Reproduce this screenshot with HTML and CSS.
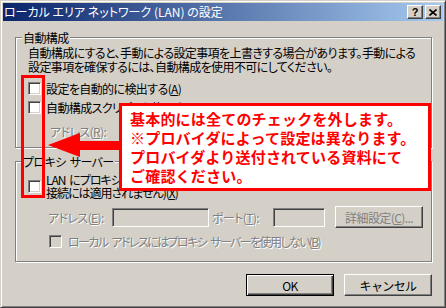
FILE: index.html
```html
<!DOCTYPE html>
<html lang="ja">
<head>
    <meta charset="UTF-8">
    <meta name="viewport" content="width=device-width, initial-scale=1.0">
    <title>ローカル エリア ネットワーク (LAN) の設定</title>
    <link rel="stylesheet" href="styles.css">
</head>
<body>
    <div class="window">
        <div class="titlebar">
            <span class="title">ローカル エリア ネットワーク (LAN) の設定</span>
            <div class="caption-buttons">
                <span class="caption-btn help">?</span>
                <span class="caption-btn close">
                    <svg width="8" height="7" viewBox="0 0 8 7"><path d="M0.5 0.5 L7.5 6.5 M7.5 0.5 L0.5 6.5" stroke="#000" stroke-width="1.6"/></svg>
                </span>
            </div>
        </div>

        <div class="content">
            <fieldset class="group group-auto">
                <legend>自動構成</legend>
                <div class="group-body">
                    <p class="desc">自動構成にすると、手動による設定事項を上書きする場合があります。手動による<br>設定事項を確保するには、自動構成を使用不可にしてください。</p>
                    <div class="check-row first"><span class="check"></span><span>設定を自動的に検出する(<u>A</u>)</span></div>
                    <div class="check-row"><span class="check"></span><span>自動構成スクリプトを使用する(<u>S</u>)</span></div>
                    <div class="script-row disabled">
                        <span>アドレス(<u>R</u>):</span>
                    </div>
                </div>
            </fieldset>

            <fieldset class="group group-proxy">
                <legend>プロキシ サーバー</legend>
                <div class="group-body">
                    <div class="check-row proxy-row">
                        <span class="check"></span>
                        <span class="two-line">LAN にプロキシ サーバーを使用する (これらの設定はダイヤルアップまたは VPN<br>接続には適用されません)(<u>X</u>)</span>
                    </div>
                    <div class="address-row disabled">
                        <span class="address-label">アドレス(<u>E</u>):</span>
                        <span class="textbox textbox-address"></span>
                        <span class="port-label">ポート(<u>T</u>):</span>
                        <span class="textbox textbox-port"></span>
                        <button type="button" class="btn btn-advanced">詳細設定(<u>C</u>)...</button>
                    </div>
                    <div class="check-row bypass-row disabled">
                        <span class="check"></span>
                        <span>ローカル アドレスにはプロキシ サーバーを使用しない(<u>B</u>)</span>
                    </div>
                </div>
            </fieldset>

            <div class="actions">
                <button type="button" class="btn btn-default">OK</button>
                <button type="button" class="btn">キャンセル</button>
            </div>
        </div>
    </div>

    <!-- annotation drawn over the dialog -->
    <div class="highlight"></div>
    <svg class="arrow" width="76" height="30" viewBox="0 0 76 30">
        <polygon points="2,15 34,3 34,11 76,11 76,20 34,20 34,27" fill="#ff0000"/>
    </svg>
    <div class="note">
        基本的には全てのチェックを外します。<br>
        ※プロバイダによって設定は異なります。<br>
        プロバイダより送付されている資料にて<br>
        ご確認ください。
    </div>
</body>
</html>
```

FILE: styles.css
```css
body {
    margin: 0;
    font-family: "Noto Sans CJK JP", sans-serif;
    font-size: 12px;
    font-feature-settings: "palt";
    letter-spacing: -0.6px;
    word-spacing: 2px;
    color: #000;
}
.window {
    width: 446px;
    height: 308px;
    box-sizing: border-box;
    padding: 2px;
    background-color: #d4d0c8;
    border: 1px solid;
    border-color: #d4d0c8 #404040 #404040 #d4d0c8;
    box-shadow: inset 1px 1px #fff, inset -1px -1px #808080;
}
.titlebar {
    display: flex;
    align-items: center;
    height: 18px;
    padding-left: 1px;
    background: linear-gradient(to right, #0a246a, #a6caf0);
    color: #fff;
}
.title {
    line-height: 18px;
    letter-spacing: 0;
    word-spacing: 0;
    white-space: nowrap;
}
.caption-buttons {
    display: flex;
    gap: 2px;
    margin-left: auto;
    margin-right: 2px;
}
.caption-btn {
    display: flex;
    align-items: center;
    justify-content: center;
    width: 16px;
    height: 14px;
    box-sizing: border-box;
    background-color: #d4d0c8;
    color: #000;
    border: 1px solid;
    border-color: #fff #404040 #404040 #fff;
    box-shadow: inset -1px -1px #808080;
}
.help {
    font-family: "Liberation Sans", sans-serif;
    font-weight: bold;
    font-size: 11px;
    line-height: 1;
    letter-spacing: 0;
}
.content {
    padding: 9px 11px 0 12px;
}
.group {
    margin: 0;
    padding: 0 0 0 6px;
    min-width: 0;
    box-sizing: border-box;
    border: 1px solid #808080;
    box-shadow: inset 1px 1px #fff, 1px 1px #fff;
}
.group legend {
    padding: 0 1px;
    line-height: 15px;
    background-color: #d4d0c8;
}
.group-auto {
    height: 118px;
}
.group-proxy {
    height: 108px;
    margin-top: 6px;
}
.group-body {
    padding-left: 6px;
}
.desc {
    margin: 1px 0 0;
    line-height: 14px;
    white-space: nowrap;
}
.check-row {
    display: flex;
    align-items: center;
    gap: 5px;
    height: 19px;
    white-space: nowrap;
}
.check-row.first {
    margin-top: 5px;
}
.check {
    flex: none;
    width: 13px;
    height: 13px;
    box-sizing: border-box;
    background-color: #fff;
    border: 1px solid;
    border-color: #808080 #fff #fff #808080;
    box-shadow: inset 1px 1px #404040, inset -1px -1px #d4d0c8;
}
.disabled {
    color: #808080;
    text-shadow: 1px 1px 0 #fff;
}
.disabled .check {
    background-color: #d4d0c8;
}
.script-row {
    display: flex;
    align-items: center;
    height: 22px;
    margin-top: 3px;
    padding-left: 22px;
}
.proxy-row {
    height: auto;
    margin-top: 4px;
}
.two-line {
    line-height: 13px;
    letter-spacing: -1px;
}
.address-row {
    display: flex;
    align-items: center;
    height: 22px;
    margin-top: 7px;
    padding-left: 20px;
    white-space: nowrap;
}
.address-label {
    width: 64px;
}
.port-label {
    width: 61px;
    margin-left: 3px;
}
.textbox {
    height: 19px;
    box-sizing: border-box;
    background-color: #d4d0c8;
    border: 1px solid;
    border-color: #808080 #fff #fff #808080;
    box-shadow: inset 1px 1px #404040, inset -1px -1px #d4d0c8;
}
.textbox-address {
    width: 97px;
}
.textbox-port {
    width: 52px;
}
.btn {
    display: flex;
    align-items: center;
    justify-content: center;
    width: 88px;
    height: 22px;
    box-sizing: border-box;
    padding: 0;
    font-family: inherit;
    font-size: 12px;
    letter-spacing: inherit;
    color: #000;
    background-color: #d4d0c8;
    border: 1px solid;
    border-color: #fff #404040 #404040 #fff;
    box-shadow: inset -1px -1px #808080;
}
.disabled .btn {
    color: #808080;
}
.btn-advanced {
    margin-left: 10px;
}
.btn-default {
    border-color: #000;
    box-shadow: inset 1px 1px #fff, inset -1px -1px #404040, inset -2px -2px #808080;
}
.bypass-row {
    margin-top: 4px;
    padding-left: 21px;
    gap: 6px;
    letter-spacing: -1.6px;
    word-spacing: 3px;
}
.actions {
    display: flex;
    justify-content: flex-end;
    gap: 10px;
    margin-top: 12px;
}
.highlight {
    position: absolute;
    left: 21px;
    top: 75px;
    width: 24px;
    height: 123px;
    box-sizing: border-box;
    border: 3px solid #ff0000;
}
.arrow {
    position: absolute;
    left: 46px;
    top: 130px;
}
.note {
    position: absolute;
    left: 119px;
    top: 103px;
    width: 312px;
    height: 88px;
    box-sizing: border-box;
    padding: 3px 0 0 8px;
    border: 3px solid #ff0000;
    background-color: #fff;
    color: #ff0000;
    font-size: 15px;
    font-weight: bold;
    line-height: 19px;
    letter-spacing: 0.2px;
    word-spacing: 0;
    font-feature-settings: normal;
    white-space: nowrap;
}
```
